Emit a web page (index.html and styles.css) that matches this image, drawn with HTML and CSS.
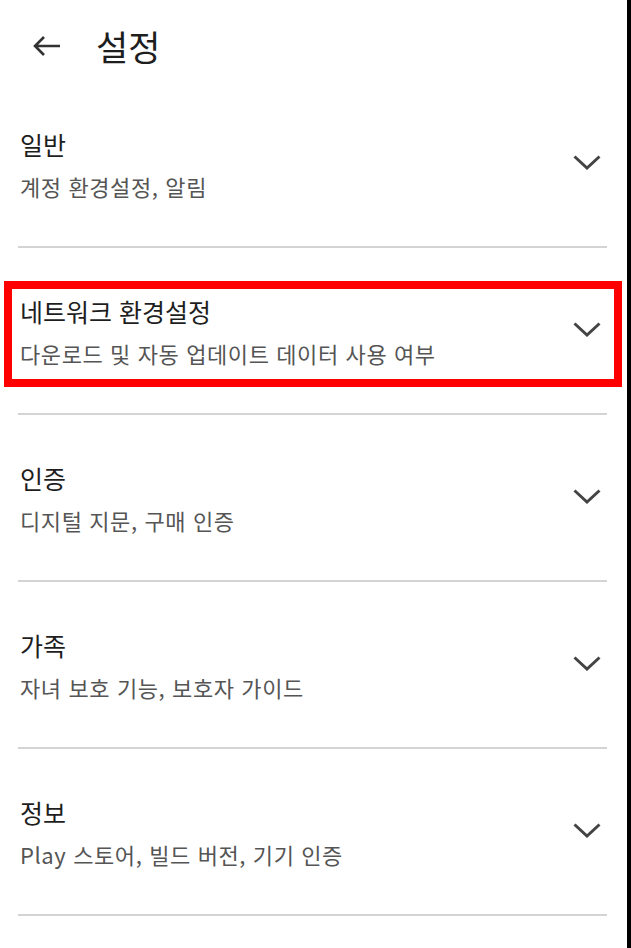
FILE: index.html
```html
<!DOCTYPE html>
<html lang="ko">

<head>
    <meta charset="UTF-8">
    <meta name="viewport" content="width=device-width, initial-scale=1.0">
    <title>설정</title>
    <link rel="stylesheet" href="styles.css">
</head>

<body>
    <div id="screen">
        <div class="topbar">
            <svg class="back" width="28" height="22" viewBox="0 0 28 22">
                <path d="M27 11H2M11 2L2 11l9 9" fill="none" stroke="#333" stroke-width="2.6" />
            </svg>
            <span class="topbar-title">설정</span>
        </div>

        <div class="list">
            <div class="item">
                <div class="item-text">
                    <div class="item-title">일반</div>
                    <div class="item-sub">계정 환경설정, 알림</div>
                </div>
                <svg class="chevron" width="28" height="15" viewBox="0 0 28 15">
                    <path d="M1.5 1.5L14 13 26.5 1.5" fill="none" stroke="#444" stroke-width="3" />
                </svg>
            </div>
            <div class="item">
                <div class="item-text">
                    <div class="item-title">네트워크 환경설정</div>
                    <div class="item-sub">다운로드 및 자동 업데이트 데이터 사용 여부</div>
                </div>
                <svg class="chevron" width="28" height="15" viewBox="0 0 28 15">
                    <path d="M1.5 1.5L14 13 26.5 1.5" fill="none" stroke="#444" stroke-width="3" />
                </svg>
                <div class="highlight"></div>
            </div>
            <div class="item">
                <div class="item-text">
                    <div class="item-title">인증</div>
                    <div class="item-sub">디지털 지문, 구매 인증</div>
                </div>
                <svg class="chevron" width="28" height="15" viewBox="0 0 28 15">
                    <path d="M1.5 1.5L14 13 26.5 1.5" fill="none" stroke="#444" stroke-width="3" />
                </svg>
            </div>
            <div class="item">
                <div class="item-text">
                    <div class="item-title">가족</div>
                    <div class="item-sub">자녀 보호 기능, 보호자 가이드</div>
                </div>
                <svg class="chevron" width="28" height="15" viewBox="0 0 28 15">
                    <path d="M1.5 1.5L14 13 26.5 1.5" fill="none" stroke="#444" stroke-width="3" />
                </svg>
            </div>
            <div class="item">
                <div class="item-text">
                    <div class="item-title">정보</div>
                    <div class="item-sub">Play 스토어, 빌드 버전, 기기 인증</div>
                </div>
                <svg class="chevron" width="28" height="15" viewBox="0 0 28 15">
                    <path d="M1.5 1.5L14 13 26.5 1.5" fill="none" stroke="#444" stroke-width="3" />
                </svg>
            </div>
        </div>
    </div>
</body>

</html>
```

FILE: styles.css
```css
body {
    margin: 0;
    background-color: #ffffff;
    font-family: "Noto Sans CJK KR", "Noto Sans", sans-serif;
}

#screen {
    width: 627px;
    min-height: 948px;
    border-right: 4px solid #000000;
}

.topbar {
    height: 81px;
    box-sizing: border-box;
    padding: 10px 0 0 33px;
    display: flex;
    align-items: center;
}

.back {
    display: block;
}

.topbar-title {
    margin-left: 35px;
    font-size: 35px;
    line-height: 42px;
    color: #1e1e1e;
}

.item {
    position: relative;
    height: 165px;
    margin: 0 20px 0 18px;
    padding: 0 6px 0 2px;
    border-bottom: 2px solid #d4d4d4;
    display: flex;
    align-items: center;
    justify-content: space-between;
}

.item-title {
    font-size: 25px;
    line-height: 34px;
    color: #1e1e1e;
}

.item-sub {
    margin-top: 10px;
    font-size: 22px;
    line-height: 30px;
    letter-spacing: 0.6px;
    color: #555555;
}

.chevron {
    display: block;
    margin-top: -2px;
}

.highlight {
    position: absolute;
    top: 33px;
    bottom: 26px;
    left: -14px;
    right: -15px;
    border: 8px solid #ff0000;
}
```
